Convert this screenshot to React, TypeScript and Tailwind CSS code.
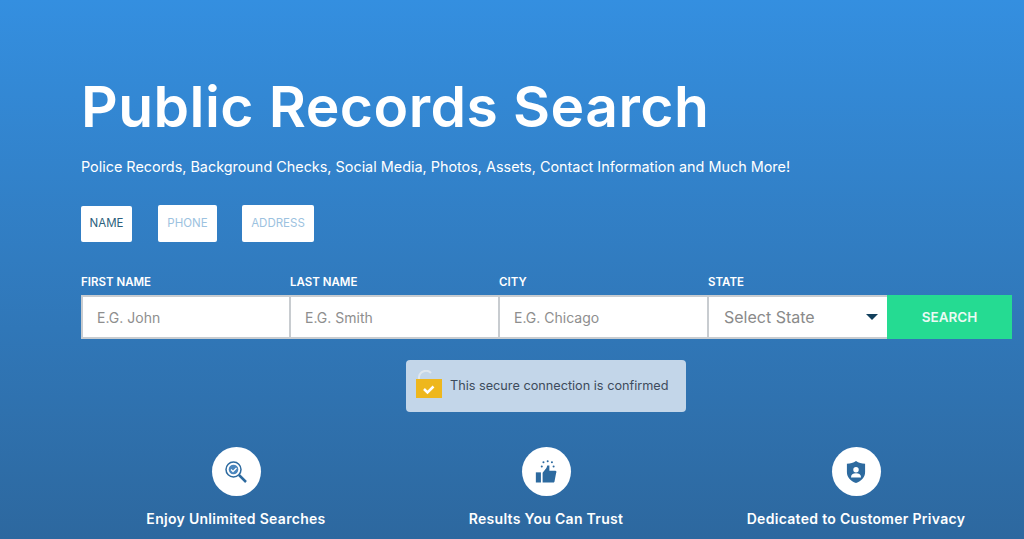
import React from "react";

const font = { fontFamily: '"Inter", "Liberation Sans", sans-serif' };

function Field({ label, placeholder, w, inset }: { label: string; placeholder: string; w: string; inset: string }) {
  return (
    <div className={`flex flex-col ${w}`}>
      <div className="text-[11.5px] leading-[16px] font-semibold text-white mb-[5px] whitespace-nowrap">{label}</div>
      <div className={`h-[44px] bg-white border-y-2 border-l-2 border-[#c8ccd0] flex items-center pl-[14px] text-[14px] text-[#8e8e8e] ${inset}`}>
        {placeholder}
      </div>
    </div>
  );
}

function Feature({ icon, label }: { icon: React.ReactNode; label: string }) {
  return (
    <div className="flex flex-col items-center w-[310px]">
      <div className="w-[49px] h-[49px] rounded-full bg-white flex items-center justify-center">{icon}</div>
      <div className="mt-[14px] text-[14px] leading-[18px] font-semibold tracking-[0.3px] text-white whitespace-nowrap">{label}</div>
    </div>
  );
}

export default function App() {
  return (
    <div style={font} className="w-[1024px] h-[539px] overflow-hidden bg-gradient-to-b from-[#348fe0] to-[#2d689f]">
      <div className="pl-[81px] pt-[72px]">
        <h1 className="text-[57px] leading-[70px] font-semibold text-white whitespace-nowrap tracking-[0.45px]">Public Records Search</h1>
        <p className="mt-[15px] text-[14.4px] leading-[20px] text-white whitespace-nowrap">
          Police Records, Background Checks, Social Media, Photos, Assets, Contact Information and Much More!
        </p>
        <div className="mt-[28px] flex items-center text-[11.5px]">
          <div className="w-[51px] h-[36px] bg-white rounded-[2px] flex items-center justify-center text-[#2c5f7c]">NAME</div>
          <div className="ml-[26px] w-[59px] h-[37px] bg-white rounded-[2px] flex items-center justify-center text-[#9cc2e0]">PHONE</div>
          <div className="ml-[25px] w-[72px] h-[37px] bg-white rounded-[2px] flex items-center justify-center text-[#9cc2e0]">ADDRESS</div>
        </div>
        <div className="mt-[32px] flex items-end">
          <Field label="FIRST NAME" placeholder="E.G. John" w="w-[209px]" inset="" />
          <Field label="LAST NAME" placeholder="E.G. Smith" w="w-[209px]" inset="-ml-px" />
          <Field label="CITY" placeholder="E.G. Chicago" w="w-[209px]" inset="-ml-px" />
          <div className="flex flex-col w-[179px]">
            <div className="text-[11.5px] leading-[16px] font-semibold text-white mb-[5px]">STATE</div>
            <div className="h-[44px] -ml-px bg-white border-y-2 border-l-2 border-[#c8ccd0] flex items-center justify-between pl-[15px] pr-[9px] text-[16px] text-[#8a8a8a]">
              <span>Select State</span>
              <svg width="12" height="6" viewBox="0 0 12 6"><path d="M0 0h12L6 6z" fill="#123f5c" /></svg>
            </div>
          </div>
          <div className="w-[125px] h-[44px] bg-[#25db92] flex items-center justify-center text-[13.5px] font-semibold text-[#eafaf4]">SEARCH</div>
        </div>
      </div>
      <div className="mt-[21px] ml-[406px] w-[280px] h-[52px] rounded-[4px] bg-[#c3d6e9] flex items-center">
        <svg width="30" height="32" viewBox="0 0 30 32" className="ml-[8px] shrink-0">
          <path d="M5 9V7a7 7 0 0 1 12-4" fill="none" stroke="#dfe7ef" strokeWidth="2" />
          <rect x="2" y="9" width="26" height="19" fill="#eeb71d" />
          <path d="M10 19l3.500 3.500 6-6" fill="none" stroke="#fff" strokeWidth="2.5" />
        </svg>
        <span className="ml-[6px] text-[12.7px] text-[#3d4b5c] whitespace-nowrap">This secure connection is confirmed</span>
      </div>
      <div className="mt-[35px] pl-[81px] flex">
        <Feature
          label="Enjoy Unlimited Searches"
          icon={
            <svg width="24" height="24" viewBox="0 0 24 24" fill="none" stroke="#2d6a9f">
              <circle cx="9.500" cy="9.500" r="7.500" strokeWidth="1.500" />
              <circle cx="9.500" cy="9.500" r="4.800" fill="#4b86bd" stroke="none" />
              <path d="M7 9.500l2 2 3.500-3.500" stroke="#fff" strokeWidth="1.300" />
              <path d="M15 15l7 7" strokeWidth="2.500" />
            </svg>
          }
        />
        <Feature
          label="Results You Can Trust"
          icon={
            <svg width="22" height="25" viewBox="0 0 26 28" fill="#2d6a9f">
              <rect x="1" y="15" width="6" height="12" />
              <path d="M9 15.500l4.500-5.500 1-3h2.500v6h7a1.500 1.500 0 0 1 1 2.500L23 26a2 2 0 0 1-2 1H9z" />
              <circle cx="15" cy="2" r="1.200" /><circle cx="20" cy="3" r="1.200" /><circle cx="10" cy="3" r="1.200" />
              <circle cx="8" cy="8" r="1.200" /><circle cx="22" cy="8" r="1.200" />
            </svg>
          }
        />
        <Feature
          label="Dedicated to Customer Privacy"
          icon={
            <svg width="20" height="24" viewBox="0 0 22 26">
              <path d="M11 1c3 2 6 3 10 3v9c0 6-4 10-10 12C5 23 1 19 1 13V4c4 0 7-1 10-3z" fill="#2d6a9f" />
              <circle cx="11" cy="10.500" r="3" fill="#fff" />
              <path d="M5.500 19c0-3 2-4.500 5.500-4.500s5.500 1.500 5.500 4.500z" fill="#fff" />
            </svg>
          }
        />
      </div>
    </div>
  );
}
